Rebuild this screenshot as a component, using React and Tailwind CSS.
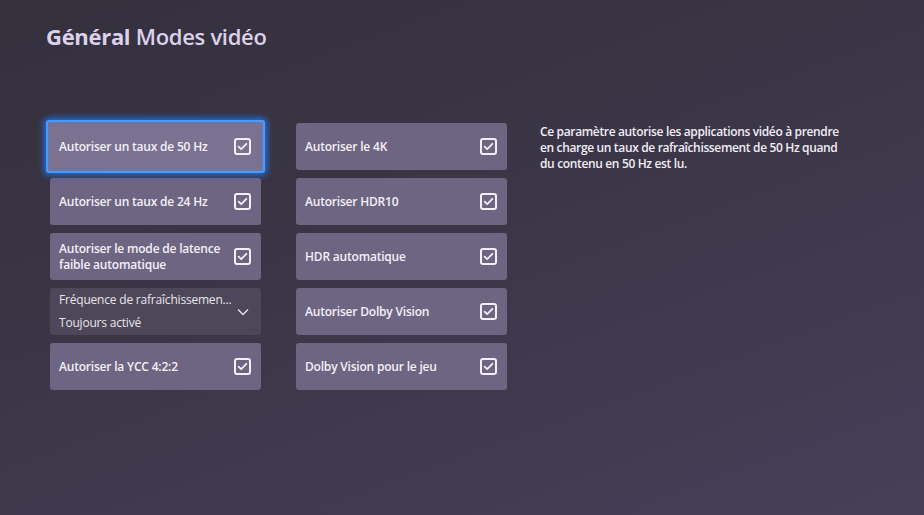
import React from 'react';

const font = { fontFamily: '"Open Sans", Lato, sans-serif' };

function Check() {
  return (
    <svg width="17" height="17" viewBox="0 0 17 17" className="shrink-0">
      <rect x="1" y="1" width="15" height="15" rx="2" fill="none" stroke="#f3eff8" strokeWidth="2" />
      <path d="M4.6 8.6 L7.2 11.2 L12.4 5.8" fill="none" stroke="#f3eff8" strokeWidth="1.8" strokeLinecap="round" strokeLinejoin="round" />
    </svg>
  );
}

function Toggle({ label, focused }) {
  return (
    <div
      className={`rounded-[3px] flex items-center justify-between ${
        focused
          ? 'h-[53px] w-[219px] -mx-[4px] -my-[3px] pl-[11px] pr-[12px] bg-[#7a7290] border-2 border-[#4a9bff] shadow-[0_0_6px_2px_rgba(30,125,255,0.85),inset_0_0_3px_rgba(60,140,255,0.6)] relative z-10'
          : 'h-[47px] w-[211px] pl-[9px] pr-[10px] bg-[#6d6582]'
      }`}
    >
      <span className="text-[12px] leading-[16px] font-semibold tracking-[-0.2px] text-[#f4f0f8] pr-3">{label}</span>
      <Check />
    </div>
  );
}

function Dropdown() {
  return (
    <div className="h-[47px] w-[211px] rounded-[3px] bg-[#4d4759] flex items-center justify-between pl-[9px] pr-[10px]">
      <div className="flex flex-col gap-[7px] text-[12px] leading-[16px] tracking-[-0.2px] text-[#e9e4ef]">
        <span>Fréquence de rafraîchissemen...</span>
        <span>Toujours activé</span>
      </div>
      <svg width="12" height="8" viewBox="0 0 12 8" className="mr-[2px]">
        <path d="M1 1.5 L6 6.5 L11 1.5" fill="none" stroke="#e9e4ef" strokeWidth="1.3" />
      </svg>
    </div>
  );
}

export default function App() {
  return (
    <div
      className="w-[924px] h-[515px] overflow-hidden bg-[linear-gradient(160deg,#34303c_0%,#3b3647_45%,#463f59_100%)] pl-[46px] pt-[20px]"
      style={font}
    >
      <h1 className="text-[22px] leading-[32px] text-[#dcd1ec] tracking-[-0.3px]">
        <span className="font-bold">Général</span> <span className="font-semibold">Modes vidéo</span>
      </h1>

      <div className="flex mt-[71px]">
        <div className="flex flex-col gap-[8px] ml-[4px]">
          <Toggle label="Autoriser un taux de 50 Hz" focused />
          <Toggle label="Autoriser un taux de 24 Hz" />
          <Toggle label={<>Autoriser le mode de latence<br />faible automatique</>} />
          <Dropdown />
          <Toggle label="Autoriser la YCC 4:2:2" />
        </div>

        <div className="flex flex-col gap-[8px] ml-[35px]">
          <Toggle label="Autoriser le 4K" />
          <Toggle label="Autoriser HDR10" />
          <Toggle label="HDR automatique" />
          <Toggle label="Autoriser Dolby Vision" />
          <Toggle label="Dolby Vision pour le jeu" />
        </div>

        <p className="ml-[33px] mt-[1px] w-[340px] text-[12px] leading-[16px] font-semibold tracking-[-0.35px] text-[#f2edf7]">
          Ce paramètre autorise les applications vidéo à prendre
          <br />
          en charge un taux de rafraîchissement de 50 Hz quand
          <br />
          du contenu en 50 Hz est lu.
        </p>
      </div>
    </div>
  );
}
